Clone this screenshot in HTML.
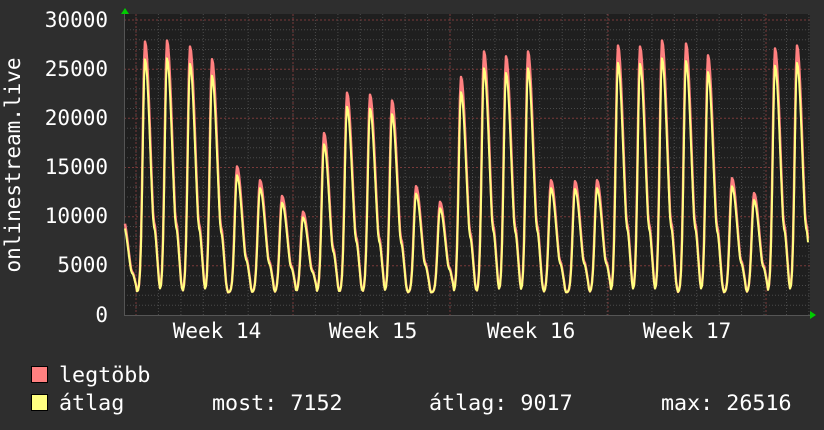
<!DOCTYPE html>
<html><head><meta charset="utf-8"><style>
html,body{margin:0;padding:0;background:#2e2e2e;width:824px;height:430px;overflow:hidden}
.t{font-family:"DejaVu Sans Mono","Liberation Mono",monospace;fill:#fff;font-size:21px}
.l{font-size:21.7px}
</style></head><body>
<svg id="s" width="824" height="430" xmlns="http://www.w3.org/2000/svg">
<rect x="124" y="14" width="686" height="302" fill="#1f1f1f"/>
<g id="grid"></g>
<g id="lines"></g>
<polygon points="121,14 129,14 125,8" fill="#00cc00"/>
<polygon points="810,311 810,319 816,315" fill="#00cc00"/>
<g class="t" text-anchor="end">
<text x="108" y="27">30000</text>
<text x="108" y="76">25000</text>
<text x="108" y="125">20000</text>
<text x="108" y="174">15000</text>
<text x="108" y="223">10000</text>
<text x="108" y="272">5000</text>
<text x="108" y="322">0</text>
</g>
<g class="t" text-anchor="middle">
<text x="217" y="338">Week 14</text>
<text x="373" y="338">Week 15</text>
<text x="531" y="338">Week 16</text>
<text x="687" y="338">Week 17</text>
</g>
<text class="t" transform="translate(20,165) rotate(-90)" text-anchor="middle">onlinestream.live</text>
<rect x="31.5" y="366.5" width="16" height="16" fill="#ff8080" stroke="#000"/>
<rect x="31.5" y="394.5" width="16" height="16" fill="#ffff80" stroke="#000"/>
<g class="t l">
<text x="59" y="382">legtöbb</text>
<text x="59" y="410">átlag</text>
<text x="212" y="410">most: 7152</text>
<text x="429" y="410">átlag: 9017</text>
<text x="661" y="410">max: 26516</text>
</g>
</svg>
<script>
function Y(v){return 315-v*295/30000;}
var g=document.getElementById("grid"),h="";
for(var v=1000;v<=30000;v+=1000){var y=Y(v).toFixed(1);var red=v%5000==0;
h+='<line x1="124" x2="810" y1="'+y+'" y2="'+y+'" stroke="'+(red?'#7a3a3a':'#4a4a4a')+'" stroke-dasharray="'+(red?'2,2':'1,2')+'"/>';}
for(var x=136-22.43*5;x<810;x+=22.43){if(x<124)continue;h+='<line y1="14" y2="316" x1="'+x.toFixed(1)+'" x2="'+x.toFixed(1)+'" stroke="#4a4a4a" stroke-dasharray="1,2"/>';}
[136,293,450,608,766].forEach(function(x){h+='<line y1="14" y2="318" x1="'+x+'" x2="'+x+'" stroke="#7a3a3a" stroke-dasharray="2,2"/>';});
h+='<line x1="124" x2="810" y1="315.5" y2="315.5" stroke="#555"/><line x1="124.5" x2="124.5" y1="14" y2="316" stroke="#555"/>';
g.innerHTML=h;
var pk=[[123,9500],[145,27500],[167,27600],[190,27000],[212,25700],[237,14800],[260,13400],[282,11800],[303,10200],[324,18200],[347,22300],[370,22100],[392,21500],[416,12800],[440,11200],[461,23900],[484,26500],[506,26000],[528,26500],[551,13400],[575,13300],[597,13400],[618,27100],[640,27000],[662,27600],[686,27300],[708,26100],[732,13600],[754,12100],[775,26800],[797,27100],[818,9000]];
function val(x,s){var m=2000;pk.forEach(function(p){var d=x-p[0];var w=d<0?3.2:7.5;var a=(p[1]-2000)*s;var f=Math.exp(-(d/w)*(d/w));var sh=d>0?0.35*Math.exp(-((d-9)/4)*((d-9)/4)):0;m=Math.max(m,2000+a*Math.max(f,sh*0.8)+(d>-10&&d<14?300:0));});return m;}
function poly(s,col,w){var pts=[];for(var x=125;x<=808;x+=1){pts.push(x+","+Y(val(x,s)).toFixed(1));}
return '<polyline points="'+pts.join(" ")+'" fill="none" stroke="'+col+'" stroke-width="'+w+'" stroke-linejoin="round"/>';}
document.getElementById("lines").innerHTML=poly(1,'#ff8080',2.5)+poly(0.93,'#ffff80',2);
</script>
</body></html>
